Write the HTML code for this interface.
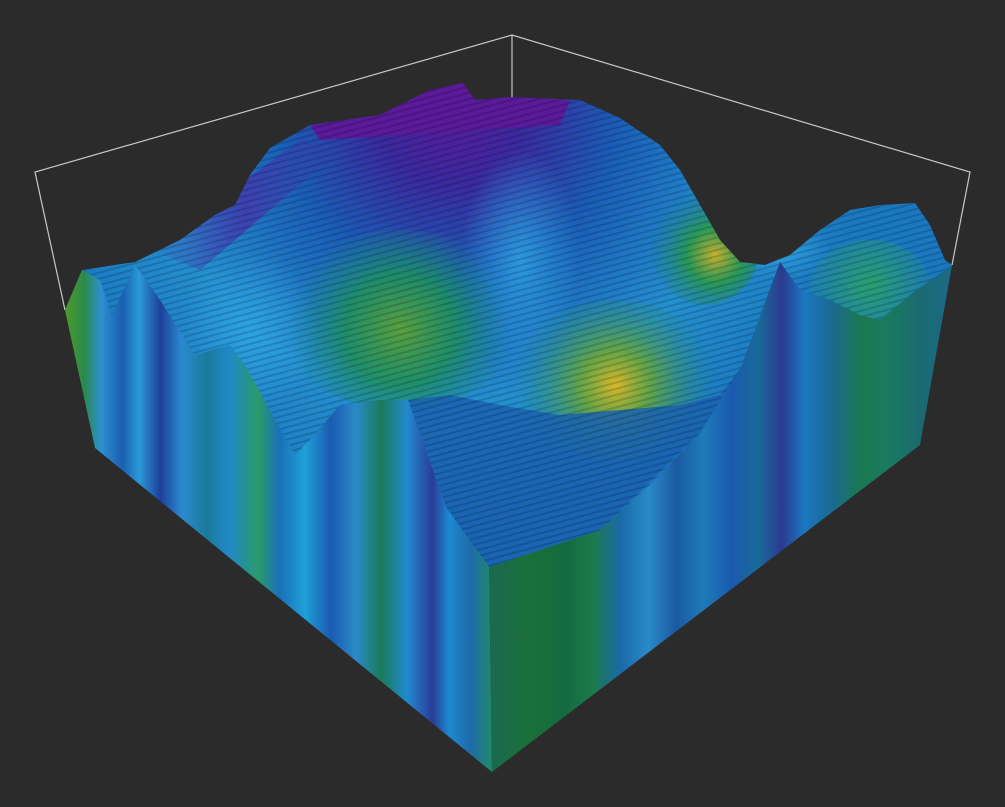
<!DOCTYPE html>
<html><head><meta charset="utf-8"><style>
html,body{margin:0;padding:0;background:#2b2b2b;}
svg{display:block}
</style></head><body>
<svg width="1005" height="807" viewBox="0 0 1005 807" xmlns="http://www.w3.org/2000/svg">
<defs>
<linearGradient id="lf" x1="67" y1="0" x2="492" y2="0" gradientUnits="userSpaceOnUse">
<stop offset="0" stop-color="#4a9a2a"/><stop offset="0.04" stop-color="#2a8a4a"/><stop offset="0.08" stop-color="#2d8fd0"/>
<stop offset="0.13" stop-color="#1a5fb0"/><stop offset="0.17" stop-color="#2a9ad8"/><stop offset="0.22" stop-color="#1e3f9a"/>
<stop offset="0.27" stop-color="#2a8ad0"/><stop offset="0.33" stop-color="#1a7a9a"/><stop offset="0.38" stop-color="#2088c8"/>
<stop offset="0.45" stop-color="#2a9a6a"/><stop offset="0.5" stop-color="#1a70b8"/><stop offset="0.56" stop-color="#1fa0d8"/>
<stop offset="0.62" stop-color="#1a5ab0"/><stop offset="0.68" stop-color="#2a8ac8"/><stop offset="0.74" stop-color="#1a7a5a"/>
<stop offset="0.8" stop-color="#228ad0"/><stop offset="0.86" stop-color="#2a3c98"/><stop offset="0.9" stop-color="#1a8ad0"/>
<stop offset="0.95" stop-color="#1f6aa8"/><stop offset="1" stop-color="#208a6a"/>
</linearGradient>
<linearGradient id="rf" x1="492" y1="0" x2="952" y2="0" gradientUnits="userSpaceOnUse">
<stop offset="0" stop-color="#1a6a50"/><stop offset="0.08" stop-color="#1a7038"/><stop offset="0.16" stop-color="#146a40"/>
<stop offset="0.22" stop-color="#1c7a4a"/><stop offset="0.28" stop-color="#1a6aa8"/><stop offset="0.34" stop-color="#2a8ac8"/>
<stop offset="0.4" stop-color="#1a5aa0"/><stop offset="0.46" stop-color="#1f7ab8"/><stop offset="0.52" stop-color="#1a5ab0"/>
<stop offset="0.58" stop-color="#1a6a98"/><stop offset="0.63" stop-color="#2a3a90"/><stop offset="0.68" stop-color="#1a78c0"/>
<stop offset="0.74" stop-color="#1a6a90"/><stop offset="0.8" stop-color="#1a7850"/><stop offset="0.86" stop-color="#1a7a60"/>
<stop offset="0.93" stop-color="#1a6a70"/><stop offset="1" stop-color="#1a6a88"/>
</linearGradient>
<radialGradient id="top" cx="450" cy="110" r="420" gradientUnits="userSpaceOnUse">
<stop offset="0" stop-color="#5a1a9a"/><stop offset="0.18" stop-color="#3a2aa0"/><stop offset="0.4" stop-color="#1a5eb8"/>
<stop offset="0.7" stop-color="#2490d0"/><stop offset="1" stop-color="#1a78c0"/>
</radialGradient>
<radialGradient id="b1" cx="400" cy="330" r="110" gradientUnits="userSpaceOnUse">
<stop offset="0" stop-color="#5aa040"/><stop offset="0.5" stop-color="#1f9060" stop-opacity="0.9"/><stop offset="1" stop-color="#1a8a8a" stop-opacity="0"/>
</radialGradient>
<radialGradient id="b2" cx="615" cy="385" r="100" gradientUnits="userSpaceOnUse">
<stop offset="0" stop-color="#d8b828"/><stop offset="0.35" stop-color="#6aa83a" stop-opacity="0.9"/><stop offset="1" stop-color="#1a8a7a" stop-opacity="0"/>
</radialGradient>
<radialGradient id="b3" cx="715" cy="255" r="70" gradientUnits="userSpaceOnUse">
<stop offset="0" stop-color="#c8b030"/><stop offset="0.4" stop-color="#2a9a4a" stop-opacity="0.9"/><stop offset="1" stop-color="#1a7a9a" stop-opacity="0"/>
</radialGradient>
<radialGradient id="b4" cx="870" cy="285" r="70" gradientUnits="userSpaceOnUse">
<stop offset="0" stop-color="#2aa070"/><stop offset="1" stop-color="#2aa070" stop-opacity="0"/>
</radialGradient>
<radialGradient id="hl" cx="0.5" cy="0.5" r="0.5">
<stop offset="0" stop-color="#30a8e8" stop-opacity="0.8"/><stop offset="1" stop-color="#30a8e8" stop-opacity="0"/>
</radialGradient>
<linearGradient id="pb" x1="0" y1="0" x2="1" y2="0">
<stop offset="0" stop-color="#4a2aa8" stop-opacity="0"/><stop offset="0.5" stop-color="#4a2aa8" stop-opacity="0.7"/><stop offset="1" stop-color="#4a2aa8" stop-opacity="0"/>
</linearGradient>
<pattern id="vox" width="8" height="6" patternUnits="userSpaceOnUse" patternTransform="rotate(-15)">
<rect width="8" height="2" fill="#000" opacity="0.16"/>
</pattern>
<clipPath id="tc"><polygon points="65,310 82,270 135,262 180,240 215,215 235,205 250,175 270,148 310,125 380,115 430,90 463,83 475,100 512,97 580,100 620,118 660,145 680,170 700,205 720,240 740,262 765,265 790,255 820,230 850,210 880,205 915,203 930,225 945,260 952,265 920,440 492,600 95,445"/></clipPath>
</defs>
<g stroke="#c8c8c8" stroke-width="1.2" fill="none">
<polyline points="65,310 35,172 512,35 970,172 952,265"/>
<line x1="512" y1="35" x2="512" y2="98"/>
</g>
<g clip-path="url(#tc)">
<rect x="0" y="0" width="1005" height="807" fill="url(#top)"/>
<polygon fill="#5a1a9a" points="310,125 380,115 430,90 463,83 475,100 512,97 570,100 560,125 470,130 400,135 320,140"/>
<polygon fill="url(#pb)" points="150,250 300,140 340,150 200,270"/>
<ellipse cx="250" cy="330" rx="70" ry="80" fill="url(#hl)"/>
<ellipse cx="520" cy="260" rx="60" ry="110" fill="url(#hl)"/>
<ellipse cx="780" cy="250" rx="50" ry="30" fill="url(#hl)"/>
<ellipse cx="400" cy="320" rx="120" ry="90" fill="url(#b1)"/>
<ellipse cx="615" cy="380" rx="110" ry="80" fill="url(#b2)"/>
<ellipse cx="705" cy="245" rx="55" ry="60" fill="url(#b3)"/>
<ellipse cx="870" cy="285" rx="60" ry="45" fill="url(#b4)"/>
<polygon fill="#1a62b0" opacity="0.85" points="408,400 450,395 500,405 560,415 620,410 680,405 720,395 741,367 720,430 700,433 600,530 489,567 446,507"/>
<rect x="0" y="0" width="1005" height="807" fill="url(#vox)"/>
</g>
<polygon fill="url(#lf)" points="65,310 82,270 100,280 112,315 135,265 160,300 195,355 230,345 245,365 275,420 295,455 310,440 340,405 380,400 408,400 446,507 489,567 492,772 95,448"/>
<polygon fill="url(#rf)" points="489,567 540,550 600,530 650,485 700,433 741,367 780,262 800,290 830,300 860,315 880,320 910,295 952,265 920,445 492,772"/>
</svg>
</body></html>
